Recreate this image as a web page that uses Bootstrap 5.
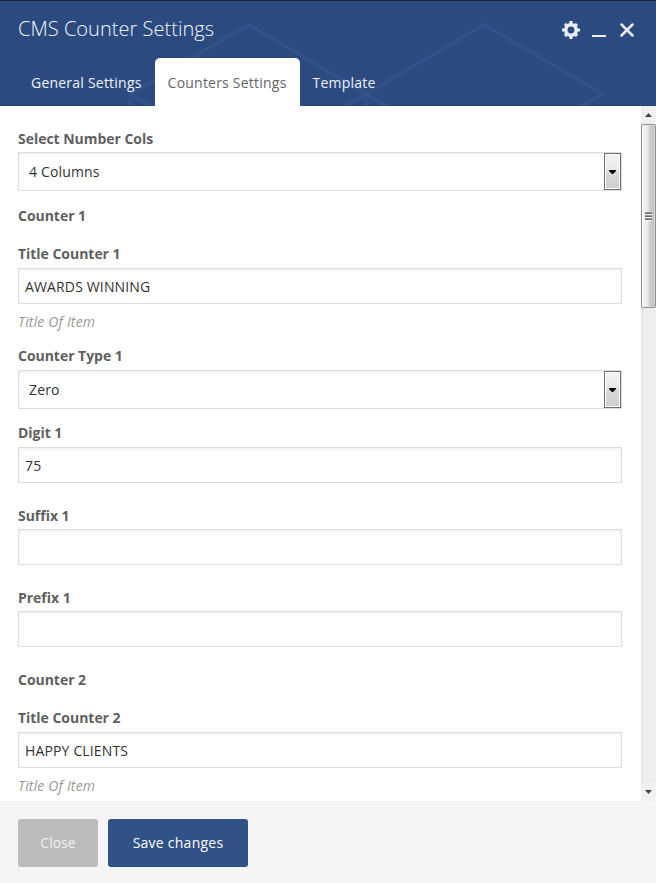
<!DOCTYPE html>
<html lang="en">
<head>
<meta charset="utf-8">
<meta name="viewport" content="width=device-width, initial-scale=1">
<title>CMS Counter Settings</title>
<link href="https://cdn.jsdelivr.net/npm/bootstrap@5.3.0/dist/css/bootstrap.min.css" rel="stylesheet">
<style>
body{font-family:"Open Sans",sans-serif;font-size:14px;line-height:20px;color:#5a5a5a;height:883px}
.panel-head{height:106px;background:#2b4b80;border-top:1px solid #22252b;border-bottom:1px solid #28457a}
.head-pattern{left:0;top:0;z-index:0}
.head-title{font-size:20px;font-weight:300;line-height:27px;letter-spacing:.03px;color:#f6f8fb;padding:14px 0 0 18px;height:57px}
.head-tools{padding:20px 21px 0 0}
.head-tools svg{display:block}
.panel-tabs{padding-left:18px;height:48px}
.panel-tabs .nav-link{color:#f0f3f8;padding:0 13px;line-height:50px;height:48px;border-radius:5px 5px 0 0;font-size:14px;letter-spacing:.22px}
.panel-tabs .nav-link.active{background:#fff;color:#666}
.panel-body{height:695px}
.fields{padding:23px 19px 0 18px}
.fields>*{flex-shrink:0}
.field-label{display:block;font-weight:700;height:20px;color:#5f5f5f;letter-spacing:-.03px;margin-bottom:4px}
.snug{margin-bottom:3px}
.section-label{margin:15px 0 18px}
.section-label.wide,.gap-before{margin-top:23px}
.tight-before{margin-top:14px}
.field-box{height:36px;border:1px solid #ddd;border-radius:0;padding:1px 6px 0;font-size:14px;line-height:20px;letter-spacing:.15px;color:#333;background:#fff;box-shadow:inset 0 1px 3px rgba(0,0,0,.08)}
.field-select{height:39px;padding:0}
.field-select select{appearance:none;border:0;background:transparent;color:#333;padding:0 0 0 10px;outline:0;letter-spacing:.15px}
.drop-btn{width:17px;border:1px solid #6e6e6e;box-shadow:inset 0 0 0 1px #fff;background:linear-gradient(#f3f3f3,#e8e8e8 48%,#dadada 50%,#cdcdcd)}
.hint{font-style:italic;letter-spacing:.17px;color:#999;padding-top:8px;height:42px}
.rail{width:15px;background:linear-gradient(90deg,#e3e3e3,#eee 3px,#eee)}
.rail-cap{height:18px;background:#f1f1f1}
.thumb{height:184px;border:1px solid #8e8e8e;border-radius:2px;background:linear-gradient(90deg,#f8f8f8,#eaeaea 45%,#d0d0d0 55%,#bcbcbc);box-shadow:inset 0 0 0 1px rgba(255,255,255,.4)}
.panel-foot{height:82px;background:#f5f5f5;padding:18px;gap:10px}
.panel-foot .btn{height:48px;border:0;border-radius:3px;font-size:14px;line-height:20px;padding:0 0 1px;color:#fff}
.panel-foot .btn-shut{width:80px;background:#bbb;color:#f2f2f2}
.panel-foot .btn-keep{width:140px;background:#305287;letter-spacing:.25px}
</style>
</head>
<body class="overflow-hidden">
<header class="panel-head position-relative">
  <svg class="head-pattern position-absolute" width="656" height="104" viewBox="0 1 656 104" fill="none" stroke="#315289" stroke-width="4">
    <path d="M130.500 110V94L248.500 24.500 366.500 94 484 24.500 602.500 94 570 113M130.500 94L165 114M334 113L366.500 94 400 114M366.500 94V110"/>
  </svg>
  <div class="position-relative">
    <div class="d-flex justify-content-between">
      <h1 class="head-title m-0">CMS Counter Settings</h1>
      <div class="head-tools d-flex">
        <svg width="19" height="18" viewBox="-9 -9 19 18" fill="none" stroke="#e9edf4"><circle r="5.200" stroke-width="3.500"/><path stroke-width="3.200" d="M0-9V-6M0 9V6M-9 0H-6M9 0H6M-6-6L-4.500-4.500M6-6L4.500-4.500M-6 6L-4.500 4.500M6 6L4.500 4.500"/></svg>
        <svg class="ms-2" width="22" height="18"><path fill="#eef1f6" d="M3 14h14v2H3z"/></svg>
        <svg class="ms-2" width="16" height="18"><path d="M2.500 3.500l11 11M13.500 3.500l-11 11" stroke="#e9edf4" stroke-width="2.500" stroke-linecap="round"/></svg>
      </div>
    </div>
    <ul class="nav panel-tabs">
      <li class="nav-item"><a class="nav-link" href="#">General Settings</a></li>
      <li class="nav-item"><a class="nav-link active" href="#">Counters Settings</a></li>
      <li class="nav-item"><a class="nav-link" href="#">Template</a></li>
    </ul>
  </div>
</header>
<main class="panel-body d-flex overflow-hidden">
  <form class="fields flex-grow-1 d-flex flex-column">
    <label class="field-label snug" for="cols">Select Number Cols</label>
    <div class="field-box field-select d-flex">
      <select id="cols" class="flex-grow-1"><option>4 Columns</option></select>
      <span class="drop-btn d-flex align-items-center justify-content-center"><svg width="7" height="4"><path d="M0 0h7v1L4 4H3L0 1z"/></svg></span>
    </div>
    <div class="field-label section-label">Counter 1</div>
    <label class="field-label" for="t1">Title Counter 1</label>
    <input id="t1" class="field-box" value="AWARDS WINNING">
    <div class="hint">Title Of Item</div>
    <label class="field-label" for="type">Counter Type 1</label>
    <div class="field-box field-select d-flex">
      <select id="type" class="flex-grow-1"><option>Zero</option></select>
      <span class="drop-btn d-flex align-items-center justify-content-center"><svg width="7" height="4"><path d="M0 0h7v1L4 4H3L0 1z"/></svg></span>
    </div>
    <label class="field-label tight-before" for="d1">Digit 1</label>
    <input id="d1" class="field-box" value="75">
    <label class="field-label snug gap-before" for="s1">Suffix 1</label>
    <input id="s1" class="field-box">
    <label class="field-label snug gap-before" for="p1">Prefix 1</label>
    <input id="p1" class="field-box">
    <div class="field-label section-label wide">Counter 2</div>
    <label class="field-label" for="t2">Title Counter 2</label>
    <input id="t2" class="field-box" value="HAPPY CLIENTS">
    <div class="hint">Title Of Item</div>
  </form>
  <div class="rail d-flex flex-column">
    <div class="rail-cap d-flex align-items-center justify-content-center"><svg width="7" height="4"><path fill="#444" d="M0 4L3.500 0 7 4z"/></svg></div>
    <div class="thumb d-flex align-items-center justify-content-center"><svg width="8" height="9"><path stroke="#666" d="M0 1.500h7M0 4.500h7M0 7.500h7"/><path stroke="#999" d="M0 .5h7M0 3.500h7M0 6.500h7"/><path stroke="#fff" d="M0 2.500h7M0 5.500h7M0 8.500h7"/></svg></div>
    <div class="rail-cap mt-auto d-flex align-items-center justify-content-center"><svg width="7" height="4"><path fill="#444" d="M0 0h7L3.500 4z"/></svg></div>
  </div>
</main>
<footer class="panel-foot d-flex">
  <button class="btn btn-shut" type="button">Close</button>
  <button class="btn btn-keep" type="button">Save changes</button>
</footer>
<script src="https://cdn.jsdelivr.net/npm/bootstrap@5.3.0/dist/js/bootstrap.bundle.min.js"></script>
</body>
</html>
